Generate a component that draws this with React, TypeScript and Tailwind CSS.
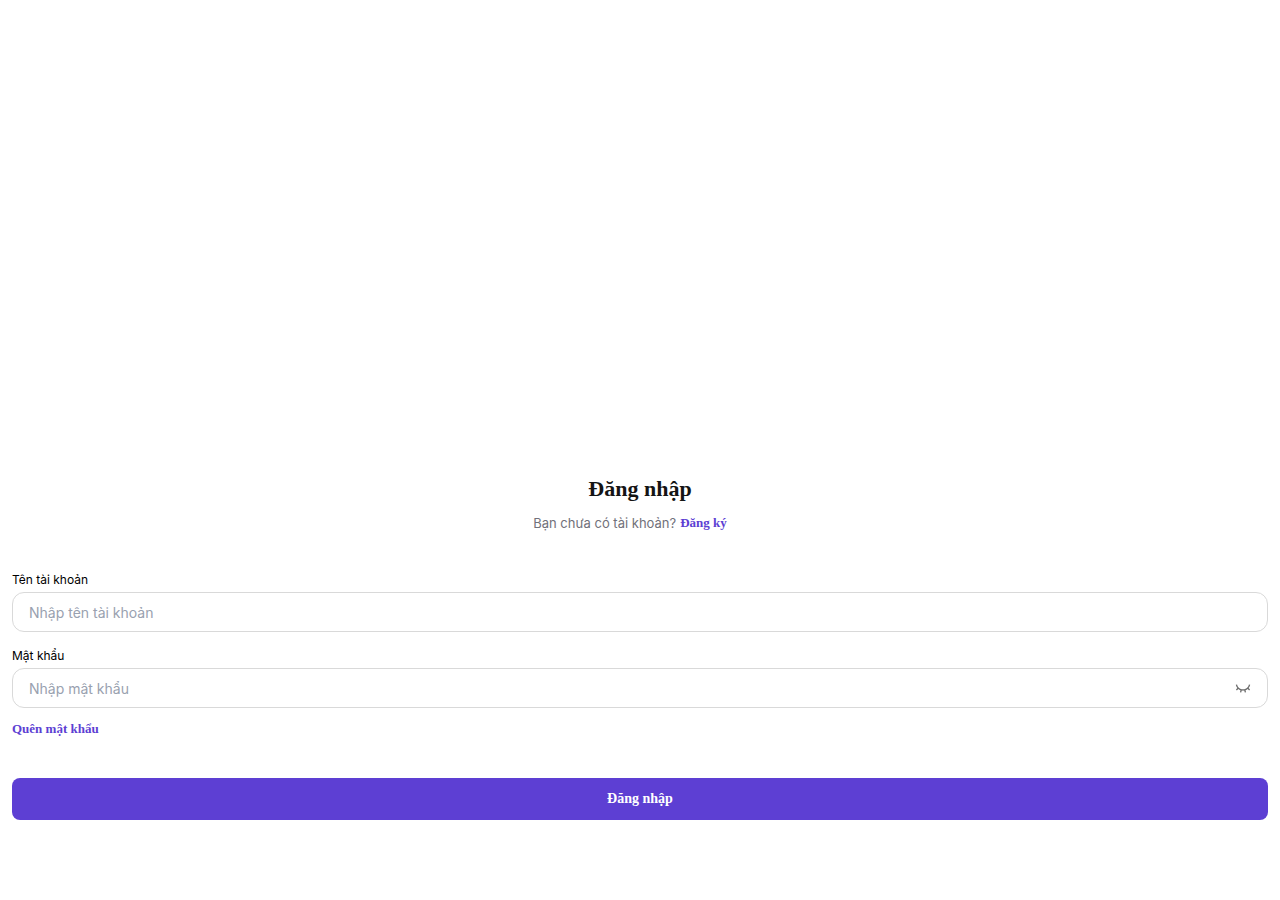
import React, { useState } from 'react';
import { RiEyeCloseLine, RiEyeLine } from 'react-icons/ri';

const inputClass =
  'block h-10 w-full rounded-xl border border-[#d9d9d9] bg-white px-4 text-sm text-black outline-none placeholder:text-gray-400 focus:border-[#5d3fd3]';
const labelClass = 'mb-1 block text-xs leading-4 text-black';
const linkClass = "font-['Liberation_Serif',serif] text-[13px] leading-[18px] font-bold text-[#5d3fd3]";

export default function App() {
  const [username, setUsername] = useState('');
  const [password, setPassword] = useState('');
  const [showPassword, setShowPassword] = useState(false);

  return (
    <main className="flex min-h-screen flex-col justify-end bg-white px-3 pb-20 font-['Inter',sans-serif]">
      <header className="text-center">
        <h1 className="font-['Liberation_Serif',serif] text-[22px] leading-[34px] font-bold text-[#141414]">Đăng nhập</h1>
        <div className="mt-2 flex items-center justify-center gap-1 pr-5 text-[13px] leading-[18px] text-[#71717a]">
          <span>Bạn chưa có tài khoản?</span>
          <a href="#register" className={linkClass}>Đăng ký</a>
        </div>
      </header>

      <form className="mt-10" onSubmit={e => e.preventDefault()}>
        <div>
          <label htmlFor="username" className={labelClass}>Tên tài khoản</label>
          <input
            id="username"
            type="text"
            placeholder="Nhập tên tài khoản"
            value={username}
            onChange={e => setUsername(e.target.value)}
            className={inputClass}
          />
        </div>

        <div className="mt-4">
          <label htmlFor="password" className={labelClass}>Mật khẩu</label>
          <div className="relative">
            <input
              id="password"
              type={showPassword ? 'text' : 'password'}
              placeholder="Nhập mật khẩu"
              value={password}
              onChange={e => setPassword(e.target.value)}
              className={inputClass}
            />
            <button
              type="button"
              aria-label="Hiện mật khẩu"
              onClick={() => setShowPassword(!showPassword)}
              className="absolute inset-y-0 right-0 px-[17px] text-[#6b6b6b]"
            >
              {showPassword ? <RiEyeLine size={16} /> : <RiEyeCloseLine size={16} />}
            </button>
          </div>
        </div>

        <a href="#forgot" className={`mt-3 block w-fit ${linkClass}`}>Quên mật khẩu</a>

        <button
          type="submit"
          className="mt-10 block w-full rounded-lg bg-[#5d3fd3] py-3 font-['Liberation_Serif',serif] text-sm leading-[18px] font-bold text-white"
        >
          Đăng nhập
        </button>
      </form>
    </main>
  );
}
